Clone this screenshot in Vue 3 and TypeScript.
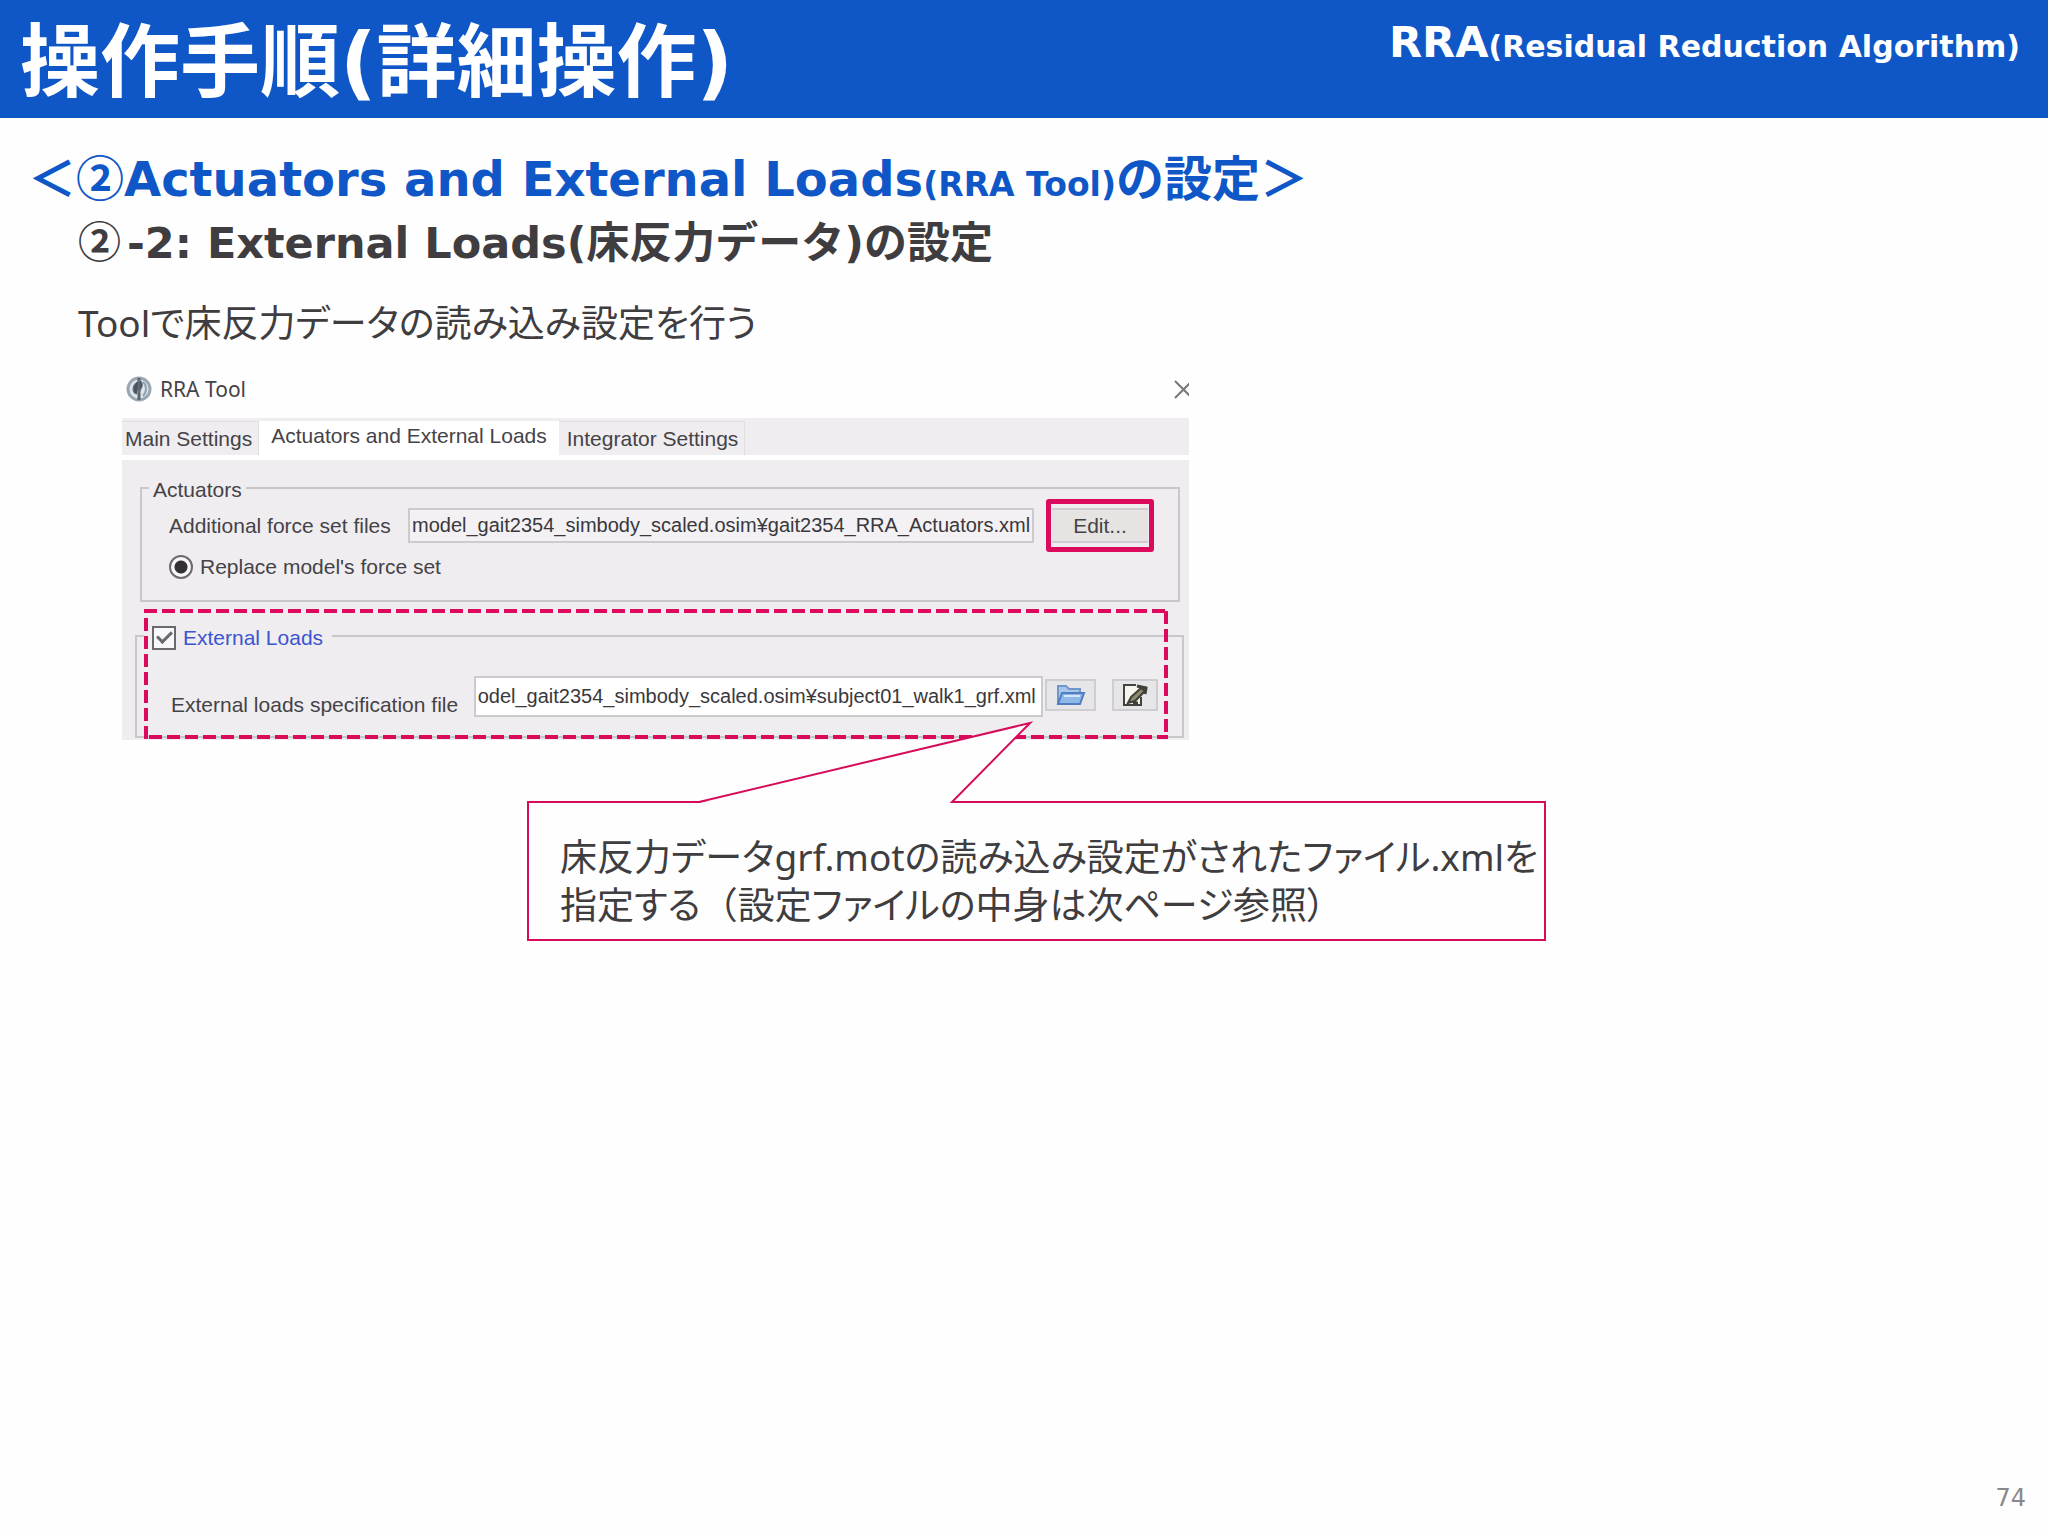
<script setup lang="ts">
import { onMounted, ref } from 'vue'

const tabs: string[] = ['Main Settings', 'Actuators and External Loads', 'Integrator Settings']
const activeTab = ref(1)
const forceSet = ref('model_gait2354_simbody_scaled.osim¥gait2354_RRA_Actuators.xml')
const loadsFile = ref('model_gait2354_simbody_scaled.osim¥subject01_walk1_grf.xml')
const loadsInput = ref<HTMLInputElement | null>(null)

// Keep the end of the long path in view
onMounted(() => {
  const el = loadsInput.value
  if (el) el.scrollLeft = el.scrollWidth
})
</script>

<template>
  <div class="slide">
    <header class="banner">
      <h1>操作手順(詳細操作)</h1>
      <p class="topic">RRA<span>(Residual Reduction Algorithm)</span></p>
    </header>

    <main class="content">
      <h2><span class="cjk">＜②</span>Actuators and External Loads<small>(RRA Tool)</small>の設定<span class="cjk">＞</span></h2>
      <h3><span class="cjk">②</span>-2: External Loads(床反力データ)の設定</h3>
      <p class="lead">Toolで床反力データの読み込み設定を行う</p>

      <section class="tool" aria-label="RRA Tool">
        <div class="titlebar">
          <svg class="app-icon" viewBox="0 0 26 26" aria-hidden="true">
            <circle cx="13" cy="13" r="11" fill="#dfe5ea" stroke="#9aa7b2" stroke-width="3" />
            <path d="M13 2v22" stroke="#59636e" stroke-width="3" />
            <path d="M13 4c3 1 4 4 3 7l-3 6zM13 5c-3 1-6 4-6 8s2 5 4 5" fill="#4c555f" stroke="#6f7a85" />
            <path d="M17 6c4 3 4 10 0 14" fill="none" stroke="#8fa3b4" stroke-width="2" />
          </svg>
          <span class="tool-name">RRA Tool</span>
          <button class="close" type="button" aria-label="Close">
            <svg viewBox="0 0 15 20" aria-hidden="true"><path d="M1 2l17 17M1 19L18 2" stroke="#777" stroke-width="2" /></svg>
          </button>
        </div>

        <div class="tabs" role="tablist">
          <button
            v-for="(tab, i) in tabs"
            :key="tab"
            type="button"
            role="tab"
            :aria-selected="i === activeTab"
            :class="{ active: i === activeTab }"
            @click="activeTab = i"
          >{{ tab }}</button>
        </div>

        <div class="body">
          <fieldset class="actuators">
            <legend>Actuators</legend>
            <div class="row">
              <label class="force-label" for="force-set">Additional force set files</label>
              <input id="force-set" v-model="forceSet" class="path" type="text" readonly />
              <span class="marked"><button class="edit" type="button">Edit...</button></span>
            </div>
            <div class="choice">
              <input id="replace" type="radio" name="mode" checked />
              <label for="replace">Replace model's force set</label>
            </div>
          </fieldset>

          <fieldset class="loads">
            <legend>
              <input id="use-loads" type="checkbox" checked />
              <label for="use-loads">External Loads</label>
            </legend>
            <div class="row">
              <label class="file-label" for="loads-file">External loads specification file</label>
              <input id="loads-file" ref="loadsInput" v-model="loadsFile" class="path" type="text" />
              <button class="icon-btn folder" type="button" aria-label="Browse">
                <svg viewBox="0 0 30 24" aria-hidden="true">
                  <path d="M2 21V3h8l3 3h11v4" fill="#a9c6ea" stroke="#6f97cc" stroke-width="2" />
                  <path d="M2 21l4-11h22l-4 11z" fill="#8db8e8" stroke="#4f7fc0" stroke-width="2" />
                  <path d="M8 13h16" stroke="#d5e6f8" stroke-width="2" />
                </svg>
              </button>
              <button class="icon-btn modify" type="button" aria-label="Edit file">
                <svg viewBox="0 0 26 24" aria-hidden="true">
                  <path d="M14 2H2v20h17v-8" fill="#f6f5ee" stroke="#44433f" stroke-width="2" />
                  <path d="M6 20l3-6 10-9 4 3-10 10z" fill="#8c8a6c" stroke="#3f3e38" stroke-width="2" />
                  <path d="M15 3l9 2-1 6M11 20h5" fill="none" stroke="#3f3e38" stroke-width="3" />
                </svg>
              </button>
            </div>
          </fieldset>
        </div>

        <svg class="outline" aria-hidden="true"><rect width="100%" height="100%" /></svg>
      </section>

      <aside class="callout">
        <svg class="pointer" viewBox="0 0 336 82" aria-hidden="true">
          <path d="M2 82L333 2L254 82z" fill="#fefefe" />
          <path d="M0 81H2L333 2L255 81H259" fill="none" stroke="#d60c5b" stroke-width="2" />
        </svg>
        <p>床反力データgrf.motの読み込み設定がされたファイル.xmlを<br />指定する<span class="full">（</span>設定ファイルの中身は次ページ参照）</p>
      </aside>
    </main>

    <footer>74</footer>
  </div>
</template>

<style>
body {
  margin: 0;
  background: #fefefe;
}
</style>

<style scoped>
.slide {
  display: flex;
  flex-direction: column;
  min-height: 100vh;
  color: #3f3d40;
  font-family: "DejaVu Sans", "Noto Sans CJK JP", sans-serif;
}

h1, h2, h3, p {
  margin: 0;
}

/* Inline runs in another face or size must not stretch their line */
.cjk, small, .topic span {
  line-height: 0;
}

.cjk {
  font-family: "Noto Sans CJK JP", sans-serif;
}

.banner {
  display: flex;
  justify-content: space-between;
  align-items: flex-start;
  box-sizing: border-box;
  height: 118px;
  padding: 8px 28px 0 20px;
  background: #0f57c7;
  color: #fff;
  font-weight: 700;
}

h1 {
  font-size: 80px;
  line-height: 110px;
}

.topic {
  padding-top: 2px;
  font-size: 43px;
  line-height: 64px;
}

.topic span {
  font-size: 30px;
}

.content {
  flex: 1;
  padding: 29px 28px 0;
}

h2 {
  color: #0f57c7;
  font-size: 48px;
  line-height: 64px;
}

h2 small {
  font-size: 33px;
}

h3 {
  padding-left: 50px;
  font-size: 43px;
  line-height: 64px;
}

h3 .cjk {
  margin-right: 6px;
}

.lead, .callout p {
  font-family: "Noto Sans", "Noto Sans CJK JP", sans-serif;
  font-size: 37px;
  font-feature-settings: "palt";
}

.lead {
  padding: 20px 0 0 50px;
  line-height: 56px;
}

.tool {
  position: relative;
  max-width: 1067px;
  margin: 9px 0 0 94px;
  color: #454347;
  font-family: "Liberation Sans", "Noto Sans CJK JP", sans-serif;
  font-size: 21px;
  line-height: 24px;
}

.titlebar {
  display: flex;
  align-items: center;
  height: 58px;
  padding-left: 4px;
}

.app-icon {
  width: 26px;
  height: 26px;
}

.tool-name {
  margin-left: 8px;
  font-family: "Noto Sans", sans-serif;
}

button {
  padding: 0;
  border: 0;
  color: inherit;
  font: inherit;
}

.close {
  width: 15px;
  height: 20px;
  margin-left: auto;
  background: none;
}

.close svg {
  display: block;
}

.tabs {
  display: flex;
  align-items: flex-end;
  height: 37px;
  background: #efedf0;
  border-bottom: 5px solid #fff;
}

.tabs button {
  box-sizing: border-box;
  height: 34px;
  padding: 0 6px 0 3px;
  border: 1px solid #e0dee1;
  border-width: 1px 1px 0 0;
  background: #efedf0;
}

.tabs button.active {
  padding: 0 12px 4px;
  border: 0;
  background: #fff;
}

.tabs button:last-child {
  padding-left: 8px;
}

.body {
  padding: 14px 5px 2px 13px;
  background: #efedf0;
}

fieldset {
  min-width: 0;
  margin: 0;
  border: 2px solid #c9c7ca;
}

.actuators {
  margin: 0 4px 0 5px;
  padding: 6px 30px 21px 27px;
}

.actuators legend {
  margin-left: -20px;
  padding: 4px 4px 0;
}

.row {
  display: flex;
  align-items: center;
}

.force-label {
  flex: 0 0 239px;
}

.path {
  flex: 1;
  box-sizing: border-box;
  min-width: 0;
  height: 35px;
  padding: 0 2px;
  border: 2px solid #cccacd;
  border-radius: 0;
  outline: 0;
  background: #f3f1f4;
  color: #3a383c;
  font-family: inherit;
  font-size: 20px;
}

.marked {
  position: relative;
  margin-left: 18px;
}

.marked::after {
  content: "";
  position: absolute;
  inset: -9px -6px;
  border: 5px solid #dc0a5c;
  border-radius: 3px;
  pointer-events: none;
}

.edit {
  display: block;
  width: 96px;
  height: 35px;
  border: 2px solid #cfcdcf;
  border-width: 2px 0;
  background: #e5e4e2;
}

.choice {
  display: flex;
  align-items: center;
  gap: 7px;
  margin-top: 12px;
}

.choice input, .loads legend input {
  appearance: none;
  flex: none;
  box-sizing: border-box;
  width: 24px;
  height: 24px;
  margin: 0;
  border: 2px solid #6b696d;
  background: #f8f7f9;
}

.choice input {
  border-radius: 50%;
}

.choice input:checked {
  background: radial-gradient(circle, #333135 0 6px, #f8f7f9 7px);
}

.loads {
  margin-top: 20px;
  padding: 26px 24px 19px 34px;
}

.loads legend {
  display: flex;
  gap: 7px;
  margin-left: -27px;
  padding: 4px 9px 0 8px;
  color: #3c55cf;
}

.loads legend input {
  position: relative;
}

.loads legend input:checked::after {
  content: "";
  position: absolute;
  left: 3px;
  top: 3px;
  width: 12px;
  height: 6px;
  border: solid #6b696d;
  border-width: 0 0 3px 3px;
  transform: rotate(-45deg);
}

.file-label {
  flex: 0 0 303px;
  align-self: flex-end;
}

.loads .path {
  height: 41px;
  padding: 0 5px 0 2px;
  background: #fff;
}

.icon-btn {
  align-self: flex-start;
  box-sizing: border-box;
  width: 51px;
  height: 32px;
  margin: 3px 0 0 2px;
  border: 2px solid #cfcdd0;
  background: #e6e5e7;
}

.icon-btn svg {
  display: block;
  height: 24px;
  margin: auto;
}

.modify {
  width: 46px;
  margin-left: 16px;
}

.outline {
  position: absolute;
  bottom: 1px;
  left: 22px;
  width: calc(100% - 43px);
  height: 130px;
  pointer-events: none;
}

.outline rect {
  fill: none;
  stroke: #dc0a5c;
  stroke-width: 8px;
  stroke-dasharray: 13px 5px;
}

.callout {
  position: relative;
  box-sizing: border-box;
  max-width: 1019px;
  margin: 61px 0 0 499px;
  padding: 30px 0 10px 31px;
  border: 2px solid #d60c5b;
  background: #fefefe;
}

.callout p {
  line-height: 48px;
}

.full {
  font-feature-settings: normal;
}

.pointer {
  position: absolute;
  left: 168px;
  bottom: 100%;
  width: 336px;
  height: 82px;
}

footer {
  padding: 0 22px 22px;
  color: #8a888b;
  font-size: 24px;
  line-height: 32px;
  text-align: right;
}
</style>
